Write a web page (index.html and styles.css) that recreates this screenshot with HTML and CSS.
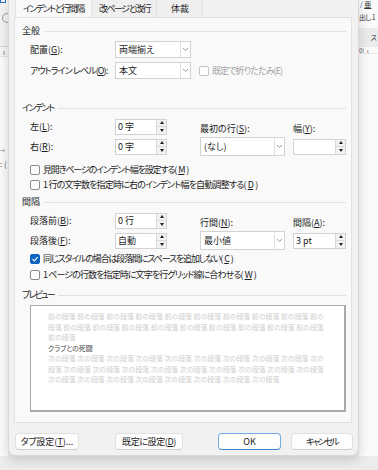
FILE: index.html
```html
<!DOCTYPE html>
<html lang="ja">
<head>
    <meta charset="UTF-8">
    <meta name="viewport" content="width=device-width, initial-scale=1.0">
    <title>段落</title>
    <link rel="stylesheet" href="styles.css">
</head>
<body>
<div class="screen">
    <div class="app-left">
        <div class="ribbon-bit"><span class="doc-icon"></span><span class="circle-icon"></span></div>
        <div class="ruler-bit">ı</div>
        <div class="page-bit"><span>-‹</span><span>: (</span></div>
    </div>

    <div class="dialog">
        <div class="tabs">
            <div class="tab active sq-15">インデントと行間隔</div>
            <div class="tab sq-15">改ページと改行</div>
            <div class="tab">体裁</div>
        </div>

        <div class="panel">
            <div class="group-title t-general">全般</div>
            <div class="form-row">
                <span class="label">配置(<u>G</u>):</span>
                <div class="combo"><span>両端揃え</span><span class="drop"><svg width="7" height="5" viewBox="0 0 7 5"><polyline points="1,1 3.5,3.5 6,1" fill="none" stroke="#8a8a8a" stroke-width="0.9"/></svg></span></div>
            </div>
            <div class="form-row">
                <span class="label sq-09">アウトライン レベル(<u>O</u>):</span>
                <div class="combo"><span>本文</span><span class="drop"><svg width="7" height="5" viewBox="0 0 7 5"><polyline points="1,1 3.5,3.5 6,1" fill="none" stroke="#8a8a8a" stroke-width="0.9"/></svg></span></div>
                <div class="check disabled collapse sq-09"><span class="box"></span>既定で折りたたみ(E)</div>
            </div>

            <div class="group-title t-indent sq-15">インデント</div>
            <div class="grid">
                <span class="label">左(<u>L</u>):</span>
                <div class="spin"><span>0 字</span><span class="arrows"><i class="up"></i><i class="down"></i></span></div>
                <span class="label top">最初の行(<u>S</u>):</span>
                <span class="label top">幅(<u>Y</u>):</span>

                <span class="label">右(<u>R</u>):</span>
                <div class="spin"><span>0 字</span><span class="arrows"><i class="up"></i><i class="down"></i></span></div>
                <div class="combo wide"><span>(なし)</span><span class="drop"><svg width="7" height="5" viewBox="0 0 7 5"><polyline points="1,1 3.5,3.5 6,1" fill="none" stroke="#8a8a8a" stroke-width="0.9"/></svg></span></div>
                <div class="spin narrow"><span></span><span class="arrows"><i class="up"></i><i class="down"></i></span></div>
            </div>
            <div class="check c-mirror sq-115"><span class="box"></span>見開きページのインデント幅を設定する(<u>M</u>)</div>
            <div class="check c-auto sq-08"><span class="box"></span>1 行の文字数を指定時に右のインデント幅を自動調整する(<u>D</u>)</div>

            <div class="group-title t-spacing">間隔</div>
            <div class="grid">
                <span class="label">段落前(<u>B</u>):</span>
                <div class="spin"><span>0 行</span><span class="arrows"><i class="up"></i><i class="down"></i></span></div>
                <span class="label top">行間(<u>N</u>):</span>
                <span class="label top">間隔(<u>A</u>):</span>

                <span class="label">段落後(<u>F</u>):</span>
                <div class="spin"><span>自動</span><span class="arrows"><i class="up"></i><i class="down"></i></span></div>
                <div class="combo wide"><span>最小値</span><span class="drop"><svg width="7" height="5" viewBox="0 0 7 5"><polyline points="1,1 3.5,3.5 6,1" fill="none" stroke="#8a8a8a" stroke-width="0.9"/></svg></span></div>
                <div class="spin narrow"><span>3 pt</span><span class="arrows"><i class="up"></i><i class="down"></i></span></div>
            </div>
            <div class="check c-same sq-115"><span class="box checked"><svg width="8" height="8" viewBox="0 0 8 8"><polyline points="1.5,4.2 3.3,6 6.6,2.2" fill="none" stroke="#fff" stroke-width="1.1"/></svg></span>同じスタイルの場合は段落間にスペースを追加しない(<u>C</u>)</div>
            <div class="check c-grid sq-09"><span class="box"></span>1 ページの行数を指定時に文字を行グリッド線に合わせる(<u>W</u>)</div>

            <div class="group-title t-preview sq-18">プレビュー</div>
            <div class="preview">
                <p class="prev-line">前の段落 前の段落 前の段落 前の段落 前の段落 前の段落 前の段落 前の段落 前の段落 前の</p>
                <p class="prev-line">段落 前の段落 前の段落 前の段落 前の段落 前の段落 前の段落 前の段落 前の段落 前の段落</p>
                <p class="prev-line">前の段落</p>
                <p class="prev-line current">クラブとの死闘</p>
                <p class="prev-line">次の段落 次の段落 次の段落 次の段落 次の段落 次の段落 次の段落 次の段落 次の段落 次の</p>
                <p class="prev-line">段落 次の段落 次の段落 次の段落 次の段落 次の段落 次の段落 次の段落 次の段落 次の段落</p>
                <p class="prev-line">次の段落 次の段落 次の段落 次の段落 次の段落 次の段落 次の段落 次の段落</p>
            </div>
        </div>

        <div class="buttons">
            <button class="btn b-tabs">タブ設定(<u>T</u>)...</button>
            <button class="btn b-default sq-04">既定に設定(<u>D</u>)</button>
            <button class="btn b-ok">OK</button>
            <button class="btn b-cancel sq-18">キャンセル</button>
        </div>
    </div>

    <div class="app-right">
        <div class="style-bit"><span class="slash">/</span> <span class="aa">亜</span></div>
        <div class="heading-bit">出し 1</div>
        <div class="band-bit">ス</div>
        <div class="ruler-right">0!&nbsp;&nbsp;ı</div>
    </div>
</div>
</body>
</html>
```

FILE: styles.css
```css
* {
    box-sizing: border-box;
}
body {
    margin: 0;
    font-family: "Noto Sans CJK JP", "Noto Sans", sans-serif;
    font-size: 9px;
    line-height: 12px;
    color: #1b1b1b;
    font-feature-settings: "palt";
}
u {
    text-decoration-thickness: 1px;
    text-underline-offset: 1px;
}

.sq-04 { letter-spacing: -0.4px; }
.sq-08 { letter-spacing: -0.8px; }
.sq-09 { letter-spacing: -0.9px; }
.sq-115 { letter-spacing: -1.15px; }
.sq-15 { letter-spacing: -1.5px; }
.sq-18 { letter-spacing: -1.8px; }

.screen {
    display: flex;
    width: 378px;
    height: 470px;
    overflow: hidden;
    background: #ececec;
}

/* word window behind the dialog */
.app-left {
    width: 8px;
    height: 456px;
    background: #fbfbfb;
    overflow: hidden;
    flex-shrink: 0;
}
.ribbon-bit {
    height: 47px;
    background: #f3f3f3;
    border-bottom: 1px solid #d6d6d6;
    position: relative;
}
.doc-icon {
    position: absolute;
    left: 0;
    top: -3px;
    width: 6px;
    height: 6px;
    border: 1px solid #2b6cc4;
}
.circle-icon {
    position: absolute;
    left: 2px;
    top: 13px;
    width: 10px;
    height: 10px;
    border: 1px solid #9a9a9a;
    border-radius: 50%;
}
.ruler-bit {
    height: 10px;
    font-size: 7px;
    line-height: 10px;
    color: #666;
    padding-left: 3px;
    background: #f6f6f6;
    border-bottom: 1px solid #e4e4e4;
}
.page-bit {
    display: flex;
    flex-direction: column;
    gap: 4px;
    margin-top: 88px;
    font-size: 8px;
    line-height: 10px;
    color: #555;
}

.app-right {
    flex: 1;
    height: 456px;
    background: #fbfbfb;
    overflow: hidden;
    white-space: nowrap;
    font-size: 7px;
}
.style-bit {
    height: 10px;
    line-height: 9px;
    padding-left: 1px;
    color: #2b5fa8;
}
.style-bit .aa {
    color: #333;
    text-decoration: underline;
}
.heading-bit {
    height: 15px;
    line-height: 15px;
    letter-spacing: -0.6px;
    color: #333;
}
.band-bit {
    height: 19px;
    margin-top: 3px;
    background: #ececec;
    text-align: right;
    padding-right: 1px;
    line-height: 19px;
    color: #444;
}
.ruler-right {
    height: 7px;
    font-size: 6px;
    line-height: 7px;
    color: #444;
    border-bottom: 1px solid #e8e8e8;
}

/* dialog */
.dialog {
    width: 351px;
    height: 456px;
    flex-shrink: 0;
    background: #f1f1f1;
    border-radius: 0 0 7px 7px;
    border: 1px solid #d8d8d8;
    border-top: none;
    box-shadow: 0 4px 12px rgba(0,0,0,0.16);
    position: relative;
    z-index: 1;
    display: flex;
    flex-direction: column;
}
.tabs {
    display: flex;
    height: 17px;
    padding-left: 6px;
}
.tab {
    height: 17px;
    padding: 0 7px;
    line-height: 17px;
    white-space: nowrap;
    background: #efefef;
    border-right: 1px solid #e2e2e2;
}
.tab.active {
    width: 77px;
    background: #f9f9f9;
    border-left: 1px solid #e2e2e2;
}
.tab:nth-child(2) {
    width: 65px;
}
.tab:nth-child(3) {
    width: 46px;
    padding-left: 14px;
}
.panel {
    display: flex;
    flex-direction: column;
    height: 406px;
    margin: 0 6px 0 5px;
    background: #f9f9f9;
    border: 1px solid #e2e2e2;
    padding: 0 5px 0 7px;
}

.group-title {
    display: flex;
    align-items: center;
    gap: 4px;
    height: 12px;
    white-space: nowrap;
}
.group-title::after {
    content: "";
    flex: 1;
    height: 1px;
    background: #e2e2e2;
}
.t-general {
    margin-top: 7px;
    margin-bottom: 4px;
}
.t-indent {
    margin-top: 19px;
    margin-bottom: 3px;
}
.t-spacing {
    margin-top: 2px;
    margin-bottom: 3px;
}
.t-preview {
    margin-top: 5px;
    margin-bottom: 4px;
}

.form-row {
    display: flex;
    align-items: center;
    height: 17px;
    margin-bottom: 4px;
    padding-left: 8px;
}
.label {
    width: 85px;
    flex-shrink: 0;
    white-space: nowrap;
}
.combo {
    display: flex;
    align-items: center;
    width: 76px;
    height: 17px;
    background: #fff;
    border: 1px solid #d2d2d2;
    padding-left: 3px;
}
.combo span:first-child {
    flex: 1;
}
.combo.wide {
    width: 85px;
    height: 19px;
}
.drop {
    width: 10px;
    height: 100%;
    border-left: 1px solid #e0e0e0;
    display: flex;
    align-items: center;
    justify-content: center;
}

.grid {
    display: grid;
    grid-template-columns: 85px 85px 93px 53px;
    grid-template-rows: 19px 19px;
    row-gap: 1px;
    align-items: center;
    padding-left: 8px;
}
.label.top {
    align-self: end;
    padding-bottom: 1px;
}
.spin {
    display: flex;
    width: 52px;
    height: 16px;
    background: #fff;
    border: 1px solid #d2d2d2;
    padding-left: 2px;
    line-height: 14px;
}
.spin.narrow {
    width: 53px;
}
.spin span:first-child {
    flex: 1;
}
.arrows {
    width: 10px;
    display: flex;
    flex-direction: column;
    background: #f2f2f2;
    border-left: 1px solid #dadada;
}
.arrows i {
    flex: 1;
    display: flex;
    align-items: center;
    justify-content: center;
}
.arrows i.up {
    border-bottom: 1px solid #dadada;
}
.arrows i.up::before {
    content: "";
    border-left: 2.5px solid transparent;
    border-right: 2.5px solid transparent;
    border-bottom: 3px solid #222;
}
.arrows i.down::before {
    content: "";
    border-left: 2.5px solid transparent;
    border-right: 2.5px solid transparent;
    border-top: 3px solid #222;
}

.check {
    display: flex;
    align-items: center;
    gap: 2px;
    height: 12px;
    margin-bottom: 3px;
    padding-left: 8px;
    white-space: nowrap;
}
.check .box {
    width: 10px;
    height: 10px;
    margin-right: 1px;
    border: 1px solid #8c8c8c;
    border-radius: 2px;
    background: #fdfdfd;
    flex-shrink: 0;
    display: flex;
    align-items: center;
    justify-content: center;
}
.check .box.checked {
    background: #0c64c0;
    border-color: #0c64c0;
}
.check.collapse {
    margin-bottom: 0;
    padding-left: 8px;
    color: #a3a3a3;
}
.check.disabled .box {
    border-color: #c4c4c4;
}
.c-mirror {
    margin-top: 8px;
}
.c-same {
    margin-top: 3px;
    margin-bottom: 4px;
}

.preview {
    height: 107px;
    margin-left: 8px;
    background: #fff;
    border: 1px solid #a9a9a9;
    border-right-width: 2px;
    border-bottom-width: 2px;
    padding: 5px 0 0 17px;
    overflow: hidden;
}
.prev-line {
    margin: 0;
    font-size: 6.9px;
    line-height: 10.5px;
    height: 10.5px;
    color: #cdcdcd;
    white-space: nowrap;
    font-feature-settings: normal;
}
.prev-line.current {
    color: #444;
    font-feature-settings: "palt";
}

.buttons {
    display: flex;
    margin-top: 10px;
    padding-left: 6px;
}
.btn {
    height: 17px;
    padding: 0;
    font-family: inherit;
    font-size: 9px;
    line-height: 14px;
    font-feature-settings: "palt";
    color: #1b1b1b;
    background: #fdfdfd;
    border: 1px solid #e1e1e1;
    border-bottom-color: #cccccc;
    border-radius: 4px;
}
.b-tabs {
    width: 64px;
}
.b-default {
    width: 68px;
    margin-left: 36px;
}
.b-ok {
    width: 63px;
    margin-left: 35px;
    border: 1px solid #72a9e0;
    border-bottom-color: #3f83cc;
}
.b-cancel {
    width: 62px;
    margin-left: 10px;
}
```
